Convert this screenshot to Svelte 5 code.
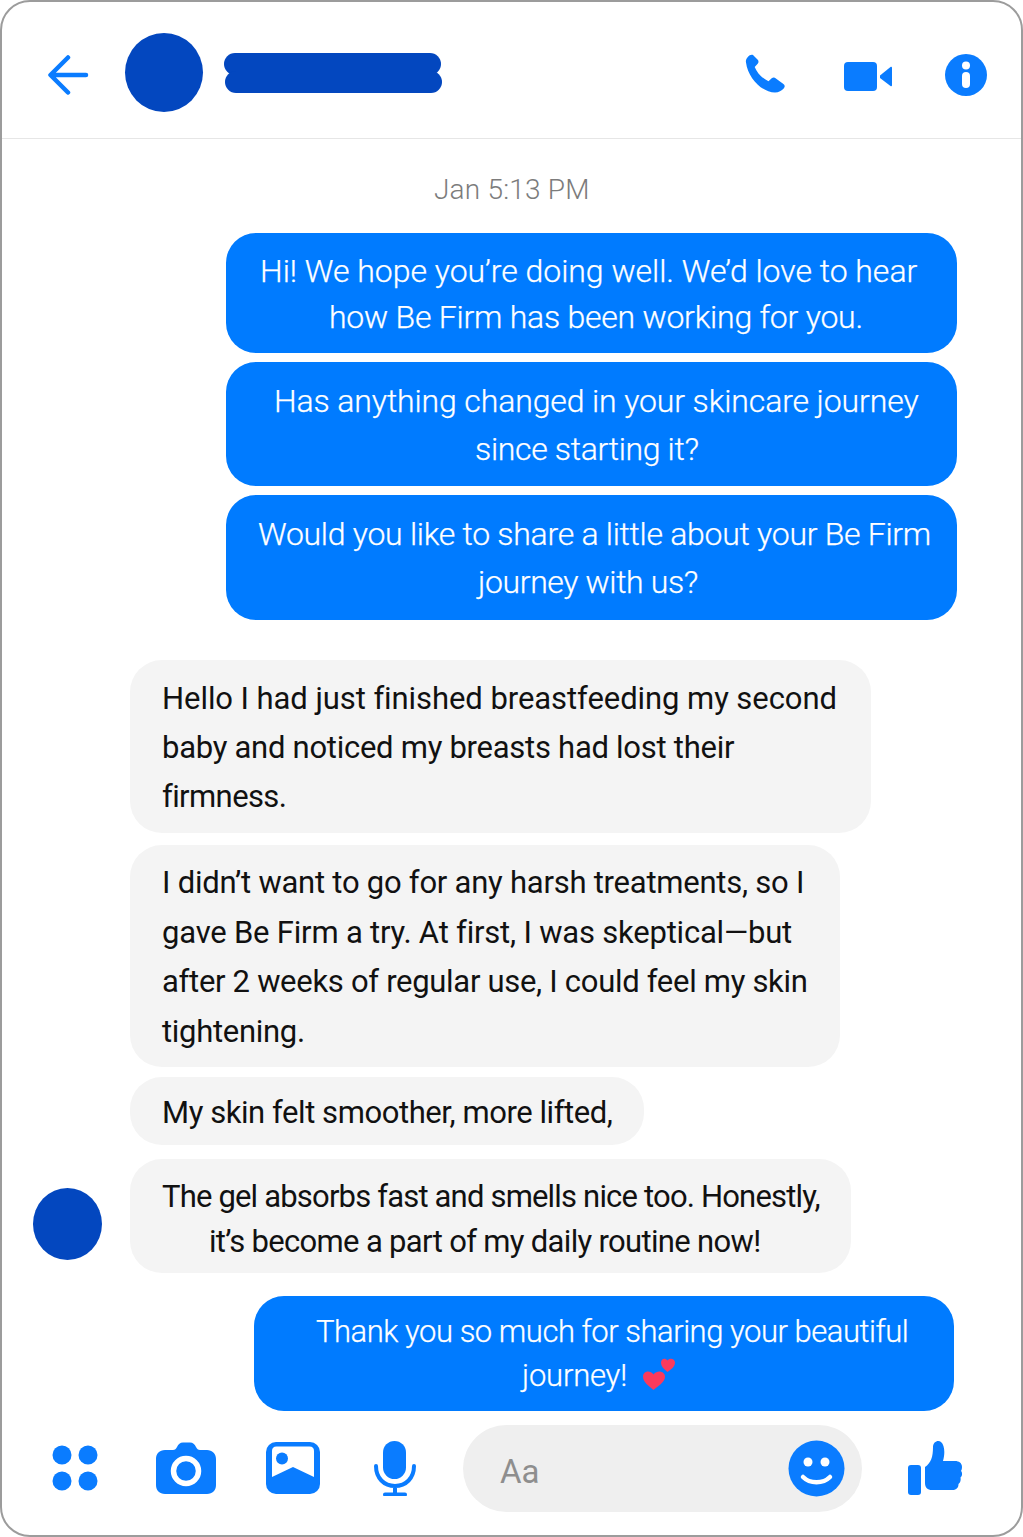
<script>
  // each line: text, left offset, letter spacing
  const sent1 = [
    { cls: "b1", lines: [["Hi! We hope you’re doing well. We’d love to hear", 34, -0.03], ["how Be Firm has been working for you.", 103, -0.24]] },
    { cls: "b2", lines: [["Has anything changed in your skincare journey", 48, -0.13], ["since starting it?", 249, -0.34]] },
    { cls: "b3", lines: [["Would you like to share a little about your Be Firm", 32, -0.29], ["journey with us?", 252, -0.37]] }
  ];
  const received = [
    { cls: "r1", lines: [["Hello I had just finished breastfeeding my second", -0.07], ["baby and noticed my breasts had lost their", -0.27], ["firmness.", -0.6]] },
    { cls: "r2", lines: [["I didn’t want to go for any harsh treatments, so I", -0.24], ["gave Be Firm a try. At first, I was skeptical—but", -0.2], ["after 2 weeks of regular use, I could feel my skin", -0.3], ["tightening.", -0.3]] },
    { cls: "r3", lines: [["My skin felt smoother, more lifted,", -0.43]] }
  ];
</script>

<div class="phone">
  <header class="top">
    <svg class="back" width="44" height="44" viewBox="0 0 44 44" fill="none" stroke="#0a7cff" stroke-width="4.500" stroke-linecap="round" stroke-linejoin="round">
      <path d="M40 24H5M22 6.500 4.500 24 22 41.500" />
    </svg>
    <div class="avatar big"></div>
    <div class="redact"><span></span><span></span></div>
    <div class="top-icons">
      <svg class="phone-ico" width="42" height="42" viewBox="0 0 42 42" fill="#0a7cff">
        <path d="M2 8.500C1 4.500 6 -.5 9 1l4.500 4.500c1.300 1.300 1.300 3 .2 4.300l-3 3.200c2.500 6 7.500 11.500 13.800 14.300l3.200-3c1.300-1.100 3-1 4.200.2l7.500 5.500c1.700 1.300 1.700 3 .3 4.500-2 2-5 4-8.700 4C18 38.500 4 24 2 8.500z" />
      </svg>
      <svg class="video-ico" width="48" height="29" viewBox="0 0 48 29" fill="#0a7cff">
        <rect x="0" y="0" width="33" height="29" rx="4" />
        <path d="M36 13.500 46.500 5c.8-.6 1.500-.2 1.500.7v17.600c0 .9-.7 1.300-1.500.7L36 16z" />
      </svg>
      <svg class="info-ico" width="42" height="42" viewBox="0 0 42 42">
        <circle cx="21" cy="21" r="21" fill="#0a7cff" />
        <circle cx="21" cy="11.500" r="4" fill="#fff" />
        <rect x="17" y="18" width="8" height="16" rx="4" fill="#fff" />
      </svg>
    </div>
  </header>

  <main class="chat">
    <div class="time">Jan 5:13 PM</div>

    {#each sent1 as m}
      <div class="bubble sent {m.cls}">
        {#each m.lines as l}
          <div class="line" style="margin-left: {l[1]}px; letter-spacing: {l[2]}px">{l[0]}</div>
        {/each}
      </div>
    {/each}

    {#each received as m}
      <div class="bubble recv {m.cls}">
        {#each m.lines as l}
          <div class="line" style="letter-spacing: {l[1]}px">{l[0]}</div>
        {/each}
      </div>
    {/each}

    <div class="last-row">
      <div class="avatar small"></div>
      <div class="bubble recv r4">
        <div class="line l1">The gel absorbs fast and smells nice too. Honestly,</div>
        <div class="line l2">it’s become a part of my daily routine now!</div>
      </div>
    </div>

    <div class="bubble sent b4">
      <div class="line one">Thank you so much for sharing your beautiful</div>
      <div class="line two">journey!
        <svg class="hearts" width="32" height="32" viewBox="0 0 32 32" fill="#fb3a5c">
          <path d="M10.500 32C6 28 0 24.500 0 18.500 0 14 6 11 10.500 16.500 15 11 22 14 22 18.500 22 24.500 15 28 10.500 32z" />
          <path d="M24.500 14C21.500 11.500 18 9 18 4.500 18 1 22 -1 24.500 2.500 27 -1 32 1 32 4.500 32 9 28 11.500 24.500 14z" />
        </svg>
      </div>
    </div>
  </main>

  <footer class="bottom">
    <svg class="grid-ico" width="46" height="46" viewBox="0 0 46 46" fill="#0a7cff">
      <circle cx="10" cy="10" r="9.500" /><circle cx="36" cy="10" r="9.500" />
      <circle cx="10" cy="36" r="9.500" /><circle cx="36" cy="36" r="9.500" />
    </svg>
    <svg class="cam-ico" width="60" height="52" viewBox="0 0 60 52">
      <path fill="#0a7cff" d="M9 8h8c2 0 3-1 4-3 1.500-3 3-4.500 6-4.500h7c3 0 4.500 1.500 6 4.500 1 2 2 3 4 3h7c5 0 9 3.500 9 9v26c0 5.500-3.500 9-9 9H9c-5.500 0-9-3.500-9-9V17c0-5.500 3.500-9 9-9z" />
      <circle cx="30" cy="29" r="12.500" fill="none" stroke="#fff" stroke-width="5.500" />
    </svg>
    <svg class="pic-ico" width="54" height="52" viewBox="0 0 54 52">
      <rect width="54" height="52" rx="10" fill="#0a7cff" />
      <path fill="#fff" d="M6 35V9c0-3 1.500-4.500 4.500-4.500h33c3 0 4.500 1.500 4.500 4.500v26L27 25z" />
      <circle cx="16" cy="16.500" r="6" fill="#0a7cff" />
    </svg>
    <svg class="mic-ico" width="42" height="55" viewBox="0 0 42 55">
      <rect x="9" y="0" width="23" height="38" rx="11.500" fill="#0a7cff" />
      <path d="M2 25c0 12 8 20 19 20s19-8 19-20M21 45v8M11 53.500h20" fill="none" stroke="#0a7cff" stroke-width="4" stroke-linecap="round" />
    </svg>
    <div class="input">
      <span>Aa</span>
      <svg width="57" height="57" viewBox="0 0 57 57">
        <circle cx="28.500" cy="28.500" r="28" fill="#0a7cff" />
        <circle cx="20" cy="22" r="4.500" fill="#fff" /><circle cx="37" cy="22" r="4.500" fill="#fff" />
        <path d="M15 37c7 7 20 7 27 0" fill="none" stroke="#fff" stroke-width="4.500" stroke-linecap="round" />
      </svg>
    </div>
    <svg class="like-ico" width="56" height="56" viewBox="0 0 56 56" fill="#0a7cff">
      <rect x="0" y="25" width="13" height="30" rx="3" />
      <path d="M17 27c6-4 8-10 8-20 0-5 5-7.500 8-5 4 3.500 4 12 2 19h12c4 0 7 2 7 6 0 2-.5 3-1 4 1.500 1.500 1.500 5-.5 6.500.5 2.500 0 5-2 6.500 0 3.500-2 6-6 6H24c-4.500 0-7-2.500-7-7z" />
    </svg>
  </footer>
</div>

<style>
  :global(body) {
    margin: 0;
    background: #fff;
  }

  .phone {
    width: 1023px;
    height: 1537px;
    box-sizing: border-box;
    border: 2px solid #9c9c9c;
    border-radius: 30px;
    background: #fff;
    font-family: Roboto, "Liberation Sans", sans-serif;
    overflow: hidden;
    display: flex;
    flex-direction: column;
  }

  .top {
    height: 137px;
    flex: none;
    box-sizing: border-box;
    border-bottom: 1px solid #e6e6e6;
    display: flex;
    align-items: center;
    padding: 10px 34px 0 44px;
  }

  .back { margin-bottom: 4px; }

  .avatar {
    background: #0347bf;
    border-radius: 50%;
    flex: none;
  }

  .avatar.big {
    width: 78px;
    height: 79px;
    margin: 0 21px 5px 35px;
  }

  .avatar.small {
    width: 69px;
    height: 72px;
    margin: 29px 28px 0 0;
  }

  .redact {
    width: 218px;
    display: flex;
    flex-direction: column;
    margin-bottom: 5px;
  }

  .redact span {
    height: 22px;
    background: #0347bf;
    border-radius: 11px;
    margin-right: 1px;
  }

  .redact span:last-child { margin: -4px 0 0 1px; }

  .top-icons {
    margin-left: auto;
    display: flex;
    align-items: center;
  }

  .phone-ico { margin-right: 58px; }
  .video-ico { margin: 3px 53px 0 0; }

  .chat {
    flex: 1;
    display: flex;
    flex-direction: column;
    align-items: flex-start;
    padding: 0 0 0 128px;
  }

  .time {
    align-self: flex-start;
    margin: 36px 0 0 304px;
    color: #7c7c7c;
    font-size: 28px;
    font-weight: 300;
    letter-spacing: 0.2px;
    line-height: 30px;
  }

  .bubble {
    box-sizing: border-box;
    font-size: 32px;
    white-space: nowrap;
  }

  .sent {
    background: #007bff;
    color: #fff;
    font-weight: 300;
    -webkit-text-stroke: 0.25px #fff;
    margin-left: 96px;
    width: 731px;
    border-radius: 30px;
  }

  .recv {
    background: #f4f4f4;
    color: #111;
    border-radius: 32px;
    padding-left: 32px;
    font-size: 31px;
  }

  .b1 { margin-top: 28px; height: 120px; padding-top: 15px; line-height: 46px; }
  .b2 { margin-top: 9px; height: 124px; padding-top: 15px; line-height: 48px; }
  .b3 { margin-top: 9px; height: 125px; padding-top: 15px; line-height: 48px; }
  .b4 { margin: 23px 0 0 124px; width: 700px; height: 115px; padding-top: 14px; line-height: 44px; font-size: 31px; }

  .r1 { margin-top: 40px; width: 741px; height: 173px; padding-top: 14px; line-height: 49px; }
  .r2 { margin-top: 12px; width: 710px; height: 222px; padding-top: 13px; line-height: 49.500px; }
  .r3 { margin-top: 10px; width: 514px; height: 68px; padding-top: 11px; line-height: 49px; }
  .r4 { width: 721px; height: 114px; padding-top: 15px; line-height: 45px; }

  .last-row {
    display: flex;
    margin: 14px 0 0 -97px;
  }

  .l1 { letter-spacing: -0.82px; }
  .l2 { margin-left: 47px; letter-spacing: -0.67px; }
  .one { margin-left: 62px; letter-spacing: -0.48px; }
  .two {
    margin-left: 268px;
    letter-spacing: -0.2px;
    display: flex;
    gap: 16px;
    align-items: flex-start;
  }

  .hearts { margin-top: 4px; -webkit-text-stroke: 0; }

  .bottom {
    height: 111px;
    display: flex;
    align-items: flex-start;
    padding-left: 50px;
    flex: none;
  }

  .grid-ico { margin-top: 21px; }
  .cam-ico { margin: 18px 0 0 58px; }
  .pic-ico { margin: 18px 0 0 50px; }
  .mic-ico { margin: 17px 0 0 54px; }

  .input {
    width: 399px;
    height: 87px;
    margin: 1px 0 0 47px;
    background: #efefef;
    border-radius: 44px;
    display: flex;
    align-items: center;
    justify-content: space-between;
    box-sizing: border-box;
    padding: 0 17px 0 37px;
    color: #8e8e8e;
    font-size: 33px;
    font-weight: 400;
  }

  .input span { margin-top: 6px; }
  .input svg { margin-top: -1px; }

  .like-ico { margin: 16px 0 0 46px; }
</style>
